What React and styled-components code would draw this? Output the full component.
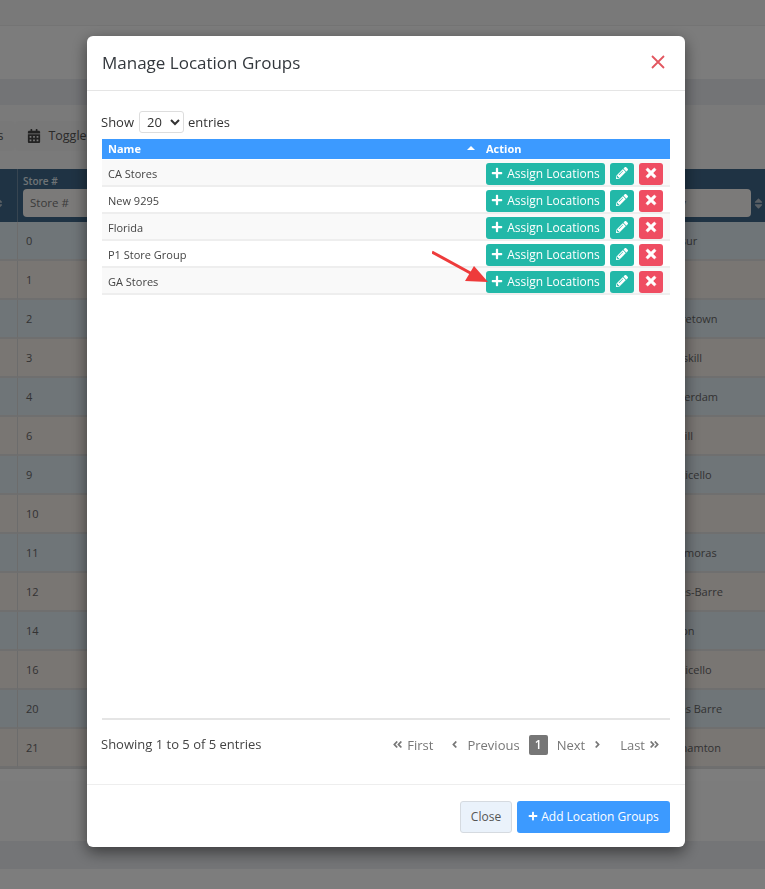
import React from "react";
import styled, { createGlobalStyle } from "styled-components";
import {
  FaPlus,
  FaPencilAlt,
  FaTimes,
  FaAngleDoubleLeft,
  FaAngleDoubleRight,
  FaAngleLeft,
  FaAngleRight,
  FaCalendarAlt,
  FaSort,
} from "react-icons/fa";

const GlobalStyle = createGlobalStyle`
  html, body {
    margin: 0;
    padding: 0;
    height: 100%;
    overflow: hidden;
    font-family: "Open Sans", "Liberation Sans", sans-serif;
    background: #fafafa;
  }
  * {
    box-sizing: border-box;
  }
`;

// page behind the backdrop
const Page = styled.div`
  height: 889px;
  display: flex;
  flex-direction: column;
  overflow: hidden;
`;

const TopStrip = styled.div`
  height: 26px;
  background: #f2f2f2;
  border-bottom: 1px solid #e8e8e8;
`;

const HeaderBand = styled.div`
  height: 53px;
  background: #f9f9f9;
`;

const Breadcrumb = styled.div`
  height: 26px;
  background: #e6e8ed;
`;

const Toolbar = styled.div`
  height: 64px;
  background: #f4f4f4;
  display: flex;
  align-items: center;
`;

const ToolButton = styled.div`
  height: 30px;
  padding: 0 12px;
  margin-top: -3px;
  display: flex;
  align-items: center;
  gap: 7px;
  font-size: 12.5px;
  color: #555;
  background: #f1f1f1;
  border-radius: 4px;
  &:first-child {
    margin-left: -60px;
  }
  svg {
    font-size: 14px;
    color: #444;
  }
`;

const TableGrid = styled.div`
  display: grid;
  grid-template-columns: 17px 636px 1fr;
  height: 600px;
  overflow: hidden;
  grid-auto-rows: 39px;
  grid-template-rows: 53px;
  border-bottom: 1px solid #ddd;
`;

const HeadCell = styled.div`
  background: #3f6688;
  border-left: ${(p) => (p.$first ? "none" : "1px solid #6f8aa3")};
  padding: 5px 5px 0;
  color: #dfe6ec;
  font-size: 10px;
  font-weight: 600;
  display: flex;
  flex-direction: column;
  position: relative;
`;

const HeadLabel = styled.span`
  height: 15px;
  line-height: 14px;
`;

const FilterBox = styled.div`
  width: ${(p) => p.$width};
  height: 28px;
  background: #f6f4f2;
  border-radius: 4px;
  padding-left: 7px;
  color: #777;
  font-size: 11.5px;
  font-weight: 400;
  line-height: 28px;
`;

const SortMark = styled(FaSort)`
  position: absolute;
  top: 28px;
  right: ${(p) => p.$right}px;
  color: #b5c0ca;
  font-size: 13px;
`;

const Cell = styled.div`
  background: ${(p) => (p.$tint ? "#dfeaf1" : "#f3ece6")};
  border-left: ${(p) => (p.$first ? "none" : "1px solid #d9d9d9")};
  border-bottom: 2px solid #dedede;
  padding-left: ${(p) => p.$pad || 8}px;
  display: flex;
  align-items: center;
  font-size: 11px;
  color: #666;
  white-space: nowrap;
  overflow: hidden;
`;

const PageFoot = styled.div`
  height: 60px;
  margin-top: 12px;
  background: #f8f8f8;
`;

const FootBar = styled.div`
  height: 28px;
  background: #e8eaee;
`;

const Backdrop = styled.div`
  position: fixed;
  inset: 0;
  background: rgba(0, 0, 0, 0.5);
`;

const Modal = styled.div`
  position: absolute;
  left: 87px;
  top: 36px;
  width: 598px;
  height: 811px;
  background: #fff;
  border-radius: 6px;
  box-shadow: 0 5px 15px rgba(0, 0, 0, 0.5);
  display: flex;
  flex-direction: column;
  color: #333;
`;

const ModalHeader = styled.div`
  height: 55px;
  flex: none;
  border-bottom: 1px solid #e5e5e5;
  padding: 0 20px 1px 15px;
  display: flex;
  align-items: center;
  justify-content: space-between;
`;

const Title = styled.h4`
  margin: 0;
  font-size: 17px;
  font-weight: 400;
  color: #33383d;
`;

const CloseCross = styled.svg`
  width: 14px;
  height: 14px;
  stroke: #e2565f;
  stroke-width: 1.8;
  fill: none;
  margin-top: -2px;
`;

const ModalBody = styled.div`
  flex: 1;
  padding: 20px 15px 0 15px;
  display: flex;
  flex-direction: column;
  min-height: 0;
`;

const LengthRow = styled.label`
  height: 22px;
  margin-left: -1px;
  display: flex;
  align-items: center;
  gap: 4px;
  font-size: 13px;
  color: #333;
`;

const LengthSelect = styled.select`
  width: 45px;
  height: 22px;
  margin-left: 1px;
  font: inherit;
  color: #333;
  background: #fff;
  border: 1px solid #ddd;
  border-radius: 3px;
  padding: 0 0 0 3px;
`;

const GroupTable = styled.div`
  margin-top: 6px;
  flex: 1;
  border-bottom: 2px solid #e5e5e5;
`;

const TableHead = styled.div`
  height: 20px;
  background: #3c9aff;
  display: grid;
  grid-template-columns: 378px 1fr;
  color: #fff;
  font-size: 11px;
  font-weight: 700;
  line-height: 19px;
`;

const NameHead = styled.div`
  padding-left: 6px;
  position: relative;
`;

const SortCaret = styled.span`
  position: absolute;
  right: 5px;
  top: 7px;
  width: 0;
  height: 0;
  border-left: 4px solid transparent;
  border-right: 4px solid transparent;
  border-bottom: 4px solid #fff;
`;

const ActionHead = styled.div`
  padding-left: 6px;
`;

const Row = styled.div`
  height: 27px;
  margin-top: ${(p) => (p.$top ? "1px" : "0")};
  padding-top: 3px;
  background: ${(p) => (p.$odd ? "#f9f9f9" : "#fff")};
  border-bottom: 2px solid #eeeeee;
  display: grid;
  grid-template-columns: 378px 1fr;
  align-items: center;
  font-size: 11px;
  color: #444;
`;

const NameCell = styled.div`
  padding-left: 6px;
  margin-top: -2px;
`;

const Actions = styled.div`
  padding-left: 6px;
  display: flex;
  gap: 5px;
`;

const SmallButton = styled.button`
  height: 22px;
  width: ${(p) => p.$width}px;
  border: none;
  border-radius: 3px;
  padding: 0 0 2px;
  display: flex;
  align-items: center;
  justify-content: center;
  gap: 4px;
  color: #fff;
  font-family: inherit;
  font-size: 12px;
  background: ${(p) => (p.$danger ? "#ef4d62" : "#22b8a8")};
`;

const FootRow = styled.div`
  height: 64px;
  flex: none;
  display: flex;
  align-items: center;
  justify-content: space-between;
  padding-bottom: 15px;
`;

const Info = styled.div`
  margin: -2px 0 0 -1px;
  font-size: 13px;
  color: #444;
`;

const Pager = styled.div`
  display: flex;
  align-items: center;
  font-size: 13px;
  color: #777;
  padding-right: 10px;
`;

const PageLink = styled.span`
  display: flex;
  align-items: center;
  gap: ${(p) => p.$iconGap || 4}px;
  margin-left: ${(p) => p.$gap || 0}px;
  svg {
    font-size: 11px;
  }
`;

const CurrentPage = styled.span`
  width: 19px;
  height: 20px;
  margin-left: 9px;
  background: #767676;
  color: #fff;
  border-radius: 2px;
  text-align: center;
  line-height: 20px;
  font-size: 12px;
  font-weight: 600;
`;

const ModalFooter = styled.div`
  height: 63px;
  flex: none;
  border-top: 1px solid #eeeeee;
  padding: 16px 15px 0;
  display: flex;
  justify-content: flex-end;
  gap: 5px;
`;

const FooterButton = styled.button`
  height: 32px;
  width: ${(p) => p.$width}px;
  padding: 0 0 2px;
  border-radius: 3px;
  font-family: inherit;
  font-size: 12px;
  display: flex;
  align-items: center;
  justify-content: center;
  gap: 3px;
  color: ${(p) => (p.$primary ? "#fff" : "#555")};
  background: ${(p) => (p.$primary ? "#3c9aff" : "#eaf2fb")};
  border: ${(p) => (p.$primary ? "none" : "1px solid #d5dae0")};
`;

const Arrow = styled.svg`
  position: absolute;
  left: 345px;
  top: 214px;
  width: 60px;
  height: 40px;
`;

const stores = [
  ["0", "Mansur"],
  ["1", ""],
  ["2", "Mooretown"],
  ["3", "Peekskill"],
  ["4", "Amsterdam"],
  ["6", "Goshill"],
  ["9", "Monticello"],
  ["10", ""],
  ["11", "Matamoras"],
  ["12", "Wilkes-Barre"],
  ["14", "Clinton"],
  ["16", "Monticello"],
  ["20", "Wilkes Barre"],
  ["21", "Binghamton"],
];

const groups = ["CA Stores", "New 9295", "Florida", "P1 Store Group", "GA Stores"];

const App = () => (
  <>
    <GlobalStyle />
    <Page>
      <TopStrip />
      <HeaderBand />
      <Breadcrumb />
      <Toolbar>
        <ToolButton>Columns</ToolButton>
        <ToolButton>
          <FaCalendarAlt />
          Toggle
        </ToolButton>
      </Toolbar>
      <TableGrid>
        <HeadCell $first>
          <SortMark $right={12} />
        </HeadCell>
        <HeadCell>
          <HeadLabel>Store #</HeadLabel>
          <FilterBox $width="120px">Store #</FilterBox>
        </HeadCell>
        <HeadCell>
          <HeadLabel>City</HeadLabel>
          <FilterBox $width="92px">City</FilterBox>
          <SortMark $right={0} />
        </HeadCell>
        {stores.map(([num, city], i) => (
          <React.Fragment key={num}>
            <Cell $first $tint={i % 2 === 0} />
            <Cell $tint={i % 2 === 0}>{num}</Cell>
            <Cell $tint={i % 2 === 0} $pad={4}>
              {city}
            </Cell>
          </React.Fragment>
        ))}
      </TableGrid>
      <PageFoot />
      <FootBar />
    </Page>
    <Backdrop>
      <Modal>
        <ModalHeader>
          <Title>Manage Location Groups</Title>
          <CloseCross viewBox="0 0 14 14">
            <path d="M1 1 L13 13 M13 1 L1 13" />
          </CloseCross>
        </ModalHeader>
        <ModalBody>
          <LengthRow>
            Show
            <LengthSelect defaultValue="20">
              <option>10</option>
              <option>20</option>
              <option>50</option>
            </LengthSelect>
            entries
          </LengthRow>
          <GroupTable>
            <TableHead>
              <NameHead>
                Name
                <SortCaret />
              </NameHead>
              <ActionHead>Action</ActionHead>
            </TableHead>
            {groups.map((name, i) => (
              <Row key={name} $odd={i % 2 === 0} $top={i === 0}>
                <NameCell>{name}</NameCell>
                <Actions>
                  <SmallButton $width={119}>
                    <FaPlus size={12} />
                    Assign Locations
                  </SmallButton>
                  <SmallButton $width={24}>
                    <FaPencilAlt size={12} />
                  </SmallButton>
                  <SmallButton $width={24} $danger>
                    <FaTimes size={14} strokeWidth={25} />
                  </SmallButton>
                </Actions>
              </Row>
            ))}
          </GroupTable>
          <FootRow>
            <Info>Showing 1 to 5 of 5 entries</Info>
            <Pager>
              <PageLink>
                <FaAngleDoubleLeft />
                First
              </PageLink>
              <PageLink $gap={16} $iconGap={7}>
                <FaAngleLeft />
                Previous
              </PageLink>
              <CurrentPage>1</CurrentPage>
              <PageLink $gap={9} $iconGap={7}>
                Next
                <FaAngleRight />
              </PageLink>
              <PageLink $gap={17}>
                Last
                <FaAngleDoubleRight />
              </PageLink>
            </Pager>
          </FootRow>
        </ModalBody>
        <ModalFooter>
          <FooterButton $width={52}>Close</FooterButton>
          <FooterButton $width={153} $primary>
            <FaPlus size={10} />
            Add Location Groups
          </FooterButton>
        </ModalFooter>
        <Arrow viewBox="0 0 60 40">
          <path d="M0 2 L42 25" stroke="#ee3b3b" strokeWidth="3" fill="none" />
          <path d="M56 32 L33 31 L42 16 Z" fill="#ee3b3b" />
        </Arrow>
      </Modal>
    </Backdrop>
  </>
);

export default App;
